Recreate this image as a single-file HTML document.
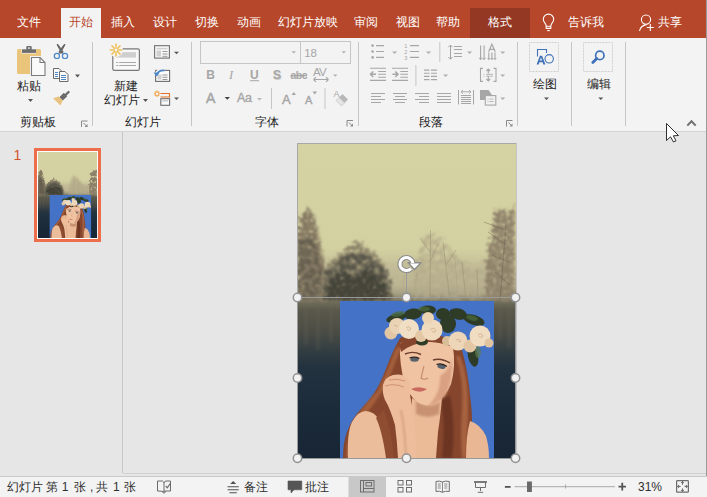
<!DOCTYPE html>
<html><head><meta charset="utf-8">
<style>
*{margin:0;padding:0;box-sizing:border-box}
html,body{width:707px;height:497px;overflow:hidden;background:#E6E6E6;font-family:"Liberation Sans",sans-serif;}
.a{position:absolute}
.t{position:absolute;font-size:12px;line-height:14px;white-space:nowrap;margin-top:1px}
#tabs{left:0;top:0;width:707px;height:38px;background:#B7472A}
.tab{color:#fff}
#ribbon{left:0;top:38px;width:707px;height:93px;background:#F3F3F3}
.lbl{color:#222}
.sep{position:absolute;width:1px;background:#C6C6C6}
.arr{position:absolute;width:0;height:0;border-left:2.5px solid transparent;border-right:2.5px solid transparent;border-top:3px solid #444}
.arrg{border-top-color:#A6A6A6}
#status{left:0;top:476px;width:707px;height:21px;background:#F3F3F3;border-top:1px solid #C9C9C9}
.st{color:#303030;font-size:12px}
</style></head><body>

<!-- tab bar -->
<div id="tabs" class="a"></div>
<div class="a" style="left:61px;top:8px;width:40px;height:30px;background:#F3F3F3"></div>
<div class="a" style="left:470px;top:8px;width:60px;height:30px;background:#953823"></div>
<div class="t tab" style="left:16.5px;top:14px">文件</div>
<div class="t" style="left:69px;top:14px;color:#B7472A">开始</div>
<div class="t tab" style="left:110.5px;top:14px">插入</div>
<div class="t tab" style="left:153px;top:14px">设计</div>
<div class="t tab" style="left:195px;top:14px">切换</div>
<div class="t tab" style="left:236.5px;top:14px">动画</div>
<div class="t tab" style="left:277.5px;top:14px">幻灯片放映</div>
<div class="t tab" style="left:354px;top:14px">审阅</div>
<div class="t tab" style="left:395.5px;top:14px">视图</div>
<div class="t tab" style="left:436px;top:14px">帮助</div>
<div class="t tab" style="left:487.5px;top:14px">格式</div>
<div class="t tab" style="left:568px;top:14px">告诉我</div>
<div class="t tab" style="left:658px;top:14px">共享</div>

<!-- ribbon -->
<div id="ribbon" class="a"></div>
<div class="a" style="left:0;top:131px;width:707px;height:1px;background:#D4D4D4"></div>
<div class="sep" style="left:92px;top:42px;height:84px"></div>
<div class="sep" style="left:191px;top:42px;height:84px"></div>
<div class="sep" style="left:358px;top:42px;height:84px"></div>
<div class="sep" style="left:517px;top:42px;height:84px"></div>
<div class="sep" style="left:571px;top:42px;height:84px"></div>
<div class="sep" style="left:625px;top:42px;height:84px"></div>

<div class="t lbl" style="left:17px;top:78px">粘贴</div>
<div class="t lbl" style="left:20px;top:114px">剪贴板</div>
<div class="t lbl" style="left:114px;top:78px">新建</div>
<div class="t lbl" style="left:104px;top:92px">幻灯片</div>
<div class="t lbl" style="left:125px;top:114px">幻灯片</div>
<div class="t lbl" style="left:255px;top:114px">字体</div>
<div class="t lbl" style="left:419px;top:114px">段落</div>
<div class="t lbl" style="left:533px;top:76px">绘图</div>
<div class="t lbl" style="left:587px;top:76px">编辑</div>

<!-- main -->
<div class="a" style="left:122px;top:132px;width:1px;height:341px;background:#C6C6C6"></div>
<div class="a" style="left:706px;top:0;width:1px;height:476px;background:#9A9A9A"></div>

<!-- status -->
<div id="status" class="a"></div>
<div class="t st" style="left:7px;top:479px">幻灯片 第 1</div>
<div class="t st" style="left:74px;top:479px">张</div>
<div class="t st" style="left:90px;top:479px">,</div>
<div class="t st" style="left:96px;top:479px">共</div>
<div class="t st" style="left:113px;top:479px">1</div>
<div class="t st" style="left:124px;top:479px">张</div>
<div class="t st" style="left:244px;top:479px">备注</div>
<div class="t st" style="left:305px;top:479px">批注</div>
<div class="t st" style="left:638px;top:479px">31%</div>

<svg class="a" style="left:530px;top:0" width="140" height="38" viewBox="530 0 140 38">
<g fill="none" stroke="#FFFFFF" stroke-width="1.1">
<path d="M546.2 26.2 V28.4 H550.8 V26.2 M546.2 26.2 Q546 24 544.6 22.6 Q543.3 21 543.3 19.3 A5.2 5.2 0 0 1 553.7 19.3 Q553.7 21 552.4 22.6 Q551 24 550.8 26.2 Z"/>
<path d="M547.2 30.6 H549.8"/>
<circle cx="646" cy="19.6" r="4.6"/>
<path d="M639.5 31 Q640.5 25.5 646.5 24.6"/>
<path d="M646.8 27.5 H653.8 M650.3 24 V31"/>
</g>
</svg>
<div class="a" style="left:123px;top:473px;width:583px;height:1px;background:#D0D0D0"></div>
<svg class="a" style="left:0;top:0" width="707" height="140" viewBox="0 0 707 140">
<!-- Paste -->
<rect x="17" y="49" width="24" height="25" rx="1.5" fill="#EBC47C"/>
<rect x="21.5" y="49" width="14.5" height="4.5" fill="#F3F3F3"/>
<rect x="22" y="49.3" width="14" height="3.6" fill="#6E6E6E"/>
<rect x="26.3" y="46" width="5.4" height="4" rx="1" fill="#6E6E6E"/>
<rect x="28.2" y="47.3" width="1.6" height="1.6" fill="#F3F3F3"/>
<path d="M30 56 H40.5 L46 61.5 V76.5 H30 Z" fill="#F3F3F3"/>
<path d="M31.5 57.5 H40 L45 62.5 V75.5 H31.5 Z" fill="#FAFAFA" stroke="#7A7A7A" stroke-width="1.1"/>
<path d="M40 57.5 V62.5 H45" fill="none" stroke="#7A7A7A" stroke-width="1.1"/>
<!-- dropdown under paste -->
<path d="M28 99 h5 l-2.5 3 z" fill="#555"/>
<!-- Scissors -->
<path d="M57 44.6 L57.9 44.4 L63.2 52 L62 53.6 Z M65.1 44.6 L64.2 44.4 L58.9 52 L60.1 53.6 Z" fill="#5F5F5F" stroke="#5F5F5F" stroke-width="0.9" stroke-linejoin="round"/>
<circle cx="56.9" cy="55.9" r="2.6" fill="none" stroke="#4A86C8" stroke-width="1.2"/>
<circle cx="65" cy="55.9" r="2.6" fill="none" stroke="#4A86C8" stroke-width="1.2"/>
<!-- Copy -->
<path d="M53.5 68.5 H59 L61.5 71 V78.5 H53.5 Z" fill="#FAFAFA" stroke="#6A6A6A" stroke-width="1"/>
<path d="M55 72.5 h3 M55 74.5 h3 M55 76.5 h3" stroke="#4A86C8" stroke-width="1"/>
<path d="M59.5 71.5 H65 L68 74.5 V81.5 H59.5 Z" fill="#FAFAFA" stroke="#6A6A6A" stroke-width="1"/>
<path d="M61 75.5 h5 M61 77.5 h5 M61 79.5 h5" stroke="#4A86C8" stroke-width="1"/>
<path d="M75 74.5 h5 l-2.5 3 z" fill="#555"/>
<!-- Format painter -->
<path d="M68.6 92 L65.3 95.3" stroke="#6A6A6A" stroke-width="2.3" stroke-linecap="round"/><path d="M59.3 97.2 L63.8 92.8 L67.2 96.2 L62.8 100.6 Z" fill="#6A6A6A"/>
<path d="M53 98.2 L58.8 96.6 L62.8 100.6 L60.5 105.5 Z" fill="#E8C27F"/>
<!-- New slide -->
<rect x="112.8" y="48.8" width="26.6" height="21.6" rx="1.6" fill="#F8F8F8" stroke="#777" stroke-width="1.2"/>
<rect x="116.2" y="52.1" width="19.8" height="5.5" fill="#CFCFCF"/>
<path d="M116.2 62.5 h2 M119.2 62.5 h16.8 M116.2 65.5 h2 M119.2 65.5 h16.8" stroke="#A6A6A6" stroke-width="1"/>
<circle cx="116" cy="50" r="7" fill="#F3F3F3"/>
<g stroke="#EFC15A" stroke-width="1.6">
<path d="M116 43.6 v4 M116 52.4 v4 M109.6 50 h4 M118.4 50 h4 M111.5 45.5 l2.8 2.8 M117.7 51.7 l2.8 2.8 M120.5 45.5 l-2.8 2.8 M114.3 51.7 l-2.8 2.8"/>
</g>
<circle cx="116" cy="50" r="2" fill="none" stroke="#EFC15A" stroke-width="1.2"/>
<path d="M143 99 h5 l-2.5 3 z" fill="#555"/>
<!-- Layout -->
<rect x="154.6" y="45.7" width="14.8" height="12.4" fill="#FAFAFA" stroke="#6E6E6E" stroke-width="1.1"/>
<rect x="156.5" y="47.8" width="11" height="1.6" fill="#D0D0D0"/>
<rect x="156.5" y="50.5" width="4.5" height="6" fill="#D0D0D0"/>
<path d="M162.5 51.5 h5 M162.5 54 h5 M162.5 56.3 h5" stroke="#8A8A8A" stroke-width="0.9"/>
<path d="M174 51.7 h5 l-2.5 2.5 z" fill="#555"/>
<!-- Reset -->
<rect x="155.6" y="70.4" width="14" height="11" fill="#FAFAFA" stroke="#6E6E6E" stroke-width="1.1"/>
<rect x="157.5" y="74.5" width="4" height="5" fill="#D0D0D0"/>
<path d="M162.5 75 h5 M162.5 77.3 h5 M162.5 79.5 h5" stroke="#8A8A8A" stroke-width="0.9"/>
<path d="M156 75 Q158 69 164.5 70.5" fill="none" stroke="#F3F3F3" stroke-width="3.5"/>
<path d="M156.5 75.5 Q158 70 164.5 70.5" fill="none" stroke="#4A86C8" stroke-width="1.8"/>
<path d="M153.5 72.5 L156.5 76.5 L159.5 72.8 Z" fill="#4A86C8"/>
<!-- Section -->
<g stroke="#EFA040" stroke-width="1.1">
<path d="M157 90.5 v6.4 M153.8 93.7 h6.4 M154.8 91.5 l4.4 4.4 M159.2 91.5 l-4.4 4.4"/>
</g>
<circle cx="157" cy="93.7" r="1.3" fill="#F3F3F3"/>
<path d="M160.5 93.5 H169.5 V97 H160.5" fill="none" stroke="#E07020" stroke-width="1.1"/>
<rect x="160.8" y="98.7" width="8.8" height="6.6" fill="#FAFAFA" stroke="#6E6E6E" stroke-width="1.1"/>
<rect x="162.2" y="100" width="6" height="1.6" fill="#D0D0D0"/>
<path d="M174 97.6 h5 l-2.5 2.5 z" fill="#555"/>
</svg>
<svg class="a" style="left:0;top:0" width="707" height="140" viewBox="0 0 707 140" font-family="Liberation Sans">
<!-- dialog launchers -->
<g stroke="#8A8A8A" stroke-width="1" fill="none">
<path d="M81.5 127 V121 H87.5"/><path d="M83.5 123 L87 126.5"/>
<path d="M347 126.5 V120.5 H353"/><path d="M349 122.5 L352.5 126"/>
<path d="M506.5 126.5 V120.5 H512.5"/><path d="M508.5 122.5 L512 126"/>
</g>
<path d="M84.5 127 h3 v-3 z" fill="#8A8A8A"/>
<path d="M350 126.5 h3 v-3 z" fill="#8A8A8A"/>
<path d="M509.5 126.5 h3 v-3 z" fill="#8A8A8A"/>
<!-- Font name box -->
<rect x="200.5" y="41.5" width="100" height="22" fill="none" stroke="#C6C6C6" stroke-width="1"/>
<rect x="300.5" y="41.5" width="50" height="22" fill="none" stroke="#C6C6C6" stroke-width="1"/>
<path d="M291.5 51.2 h4.5 l-2.25 2.3 z" fill="#B0B0B0"/>
<path d="M341.5 51.2 h4.5 l-2.25 2.3 z" fill="#B0B0B0"/>
<text x="304.2" y="56.8" font-size="11.5" fill="#A6A6A6">18</text>
<!-- B I U S abc AV -->
<text x="206.3" y="78.8" font-size="12" font-weight="bold" fill="#A6A6A6">B</text>
<text x="229" y="78.8" font-size="12.5" font-style="italic" font-family="Liberation Serif" fill="#A6A6A6">I</text>
<text x="250" y="78.8" font-size="12" font-weight="bold" fill="#A6A6A6">U</text>
<rect x="250" y="80.2" width="9" height="1" fill="#A6A6A6"/>
<text x="273.5" y="79.5" font-size="12.5" font-weight="bold" fill="#D0D0D0">S</text>
<text x="272.8" y="78.8" font-size="12.5" font-weight="bold" fill="#A6A6A6">S</text>
<text x="290.6" y="79" font-size="10.5" font-weight="bold" fill="#A6A6A6" letter-spacing="-0.6">abc</text>
<rect x="290.5" y="75" width="16.5" height="1.3" fill="#A6A6A6"/>
<text x="313" y="76" font-size="11.5" fill="#A6A6A6" letter-spacing="-0.9">AV</text>
<path d="M313.5 79.5 h15 M313.5 79.5 l2.5 -2.3 M313.5 79.5 l2.5 2.3 M328.5 79.5 l-2.5 -2.3 M328.5 79.5 l-2.5 2.3" stroke="#A6A6A6" stroke-width="1.1" fill="none"/>
<path d="M333 74.5 h4.5 l-2.25 2.3 z" fill="#B0B0B0"/>
<!-- row 3 -->
<text x="206" y="102.6" font-size="14" fill="#A6A6A6" stroke="#A6A6A6" stroke-width="0.5">A</text>
<path d="M224.6 97 h5.4 l-2.7 2.7 z" fill="#444"/>
<text x="237" y="102.3" font-size="12.5" fill="#A6A6A6" stroke="#A6A6A6" stroke-width="0.35" letter-spacing="-0.4">Aa</text>
<path d="M257 98 h5 l-2.5 2.5 z" fill="#B8B8B8"/>
<rect x="271" y="88" width="1" height="21" fill="#C6C6C6"/>
<text x="282" y="104" font-size="13" fill="#A6A6A6" stroke="#A6A6A6" stroke-width="0.4">A</text>
<path d="M291.5 95 h4.5 l-2.25 -3 z" fill="#A6A6A6"/>
<text x="305" y="104" font-size="11" fill="#A6A6A6" stroke="#A6A6A6" stroke-width="0.4">A</text>
<path d="M312.5 91.5 h4.5 l-2.25 3 z" fill="#A6A6A6"/>
<rect x="324.5" y="88" width="1" height="21" fill="#C6C6C6"/>
<text x="333.5" y="97" font-size="9" fill="#A6A6A6">A</text>
<path d="M336 100.5 L342.5 94 L348 99.5 L341.5 106 Z" fill="#B8B8B8"/>
<path d="M336 100.5 L339 97.5 L344.5 103 L341.5 106 Z" fill="#E6E6E6" stroke="#C8C8C8" stroke-width="0.6"/>
<!-- Paragraph -->
<g fill="#A6A6A6">
<circle cx="372.6" cy="45.6" r="1.3"/><circle cx="372.6" cy="51.5" r="1.3"/><circle cx="372.6" cy="57.4" r="1.3"/>
</g>
<g stroke="#A6A6A6" stroke-width="1.1" fill="none">
<path d="M376 45.6 h8 M376 51.5 h8 M376 57.4 h8"/>
<path d="M410 45.6 h9 M410 51.5 h9 M410 57.4 h9"/>
</g>
<text x="404.3" y="48.3" font-size="5.5" fill="#A6A6A6">1</text>
<text x="404.3" y="54.2" font-size="5.5" fill="#A6A6A6">2</text>
<text x="404.3" y="60.1" font-size="5.5" fill="#A6A6A6">3</text>
<path d="M392 51.6 h5.2 l-2.6 2.4 z M426 51.6 h5.2 l-2.6 2.4 z M467 51.6 h5.2 l-2.6 2.4 z M500.2 51.6 h5 l-2.5 2.4 z M443 74.5 h5.2 l-2.6 2.4 z M500.2 74.5 h5 l-2.5 2.4 z M500.2 97.6 h5 l-2.5 2.4 z" fill="#B0B0B0"/>
<rect x="439.3" y="42" width="1" height="20" fill="#C6C6C6"/>
<rect x="415.4" y="65" width="1" height="21" fill="#C6C6C6"/>
<g stroke="#A6A6A6" stroke-width="1.1" fill="none">
<!-- decrease indent -->
<path d="M370 68.3 h16 M378.3 71.5 h7.7 M378.3 74.3 h7.7 M378.3 77.2 h7.7 M370 80.4 h16"/>
<path d="M370.5 74.3 h5.5 M373.2 71.5 l-2.7 2.8 l2.7 2.8" stroke-width="1.5"/>
<!-- increase indent -->
<path d="M392 68.3 h16 M400.3 71.5 h7.7 M400.3 74.3 h7.7 M400.3 77.2 h7.7 M392 80.4 h16"/>
<path d="M392.5 74.3 h5.5 M395.3 71.5 l2.7 2.8 l-2.7 2.8" stroke-width="1.5"/>
<!-- columns -->
<path d="M424 70.1 h5.5 M431 70.1 h6 M424 73.3 h5.5 M431 73.3 h6 M424 76.4 h5.5 M431 76.4 h6 M424 79.6 h5.5 M431 79.6 h6"/>
<!-- align left -->
<path d="M371 93.5 h14 M371 96.5 h10 M371 99.5 h14 M371 102.5 h10" stroke-width="1"/>
<!-- center -->
<path d="M393 93.5 h14 M395 96.5 h10 M393 99.5 h14 M395 102.5 h10" stroke-width="1"/>
<!-- right -->
<path d="M415 93.5 h14 M419 96.5 h10 M415 99.5 h14 M419 102.5 h10" stroke-width="1"/>
<!-- justify -->
<path d="M437 93.5 h14 M437 96.5 h14 M437 99.5 h14 M437 102.5 h14" stroke-width="1"/>
<!-- distributed -->
<path d="M458.5 90 v14.5 M473.5 90 v14.5 M461 95.5 h10 M461 97.5 h10 M461 99.5 h10 M461 101.5 h10 M461 103.5 h10" stroke-width="1"/>
<path d="M461 91.8 h10 M461 91.8 l2 -1.8 M461 91.8 l2 1.8 M471 91.8 l-2 -1.8 M471 91.8 l-2 1.8" stroke-width="0.9"/>
<!-- line spacing -->
<path d="M450.5 45 v14 M448.4 47.2 l2.1 -2.2 l2.1 2.2 M448.4 57 l2.1 2.2 l2.1 -2.2" stroke-width="1"/>
<path d="M454 46.5 h8 M454 49.5 h8 M454 53.5 h8 M454 56.5 h8" stroke-width="1"/>
<!-- text direction -->
<path d="M480.6 45.5 v14 M484.1 45.5 v14 M488.8 52.5 v7 M491.9 52.5 v7 M495 52.5 v7"/>
<path d="M479 57.8 l1.6 2 l1.6 -2 M482.5 57.8 l1.6 2 l1.6 -2 M487.5 58 l1.3 1.6 l1.3 -1.6 M490.6 58 l1.3 1.6 l1.3 -1.6 M493.7 58 l1.3 1.6 l1.3 -1.6" stroke-width="0.9"/>
<!-- align text -->
<path d="M483 68.4 h-2.5 v13 h2.5 M493.5 68.4 h2.5 v13 h-2.5"/>
<path d="M488.3 69 v4.5 M486.4 71 l1.9 -2 l1.9 2 M488.3 76.5 v4.5 M486.4 79 l1.9 2 l1.9 -2"/>
<path d="M483.5 74.3 h1 M486 74.3 h7 M483.5 76.2 h1 M486 76.2 h7" stroke-width="0.8"/>
<!-- smartart -->
<rect x="485.3" y="95.6" width="10.5" height="9.5"/>
<path d="M487.5 99 h1 M489.5 99 h4 M487.5 101.5 h1 M489.5 101.5 h4" stroke-width="0.8"/>
</g>
<path d="M488.6 51.8 L491.9 44.2 L495.2 51.8 M489.8 49.3 H494" fill="none" stroke="#A6A6A6" stroke-width="1.2"/>
<path d="M480 90 h8.5 l3.5 5 h-7 v5 h-5 z" fill="#A6A6A6"/>
<!-- Drawing -->
<rect x="529.5" y="42.5" width="29" height="29" fill="none" stroke="#D0D0D0" stroke-width="1" stroke-dasharray="1 0.5"/>
<rect x="583.5" y="42.5" width="29" height="29" fill="none" stroke="#D0D0D0" stroke-width="1" stroke-dasharray="1 0.5"/>
<path d="M537.5 56.5 V49.5 H546.5 V53" fill="none" stroke="#3F72B8" stroke-width="1.1"/>
<circle cx="549.2" cy="58.8" r="4.2" fill="#F3F3F3" stroke="#3F72B8" stroke-width="1.1"/>
<path d="M536.6 64.5 L539.9 55.8 H542.1 L545.4 64.5 H543.3 L542.6 62.3 H539.4 L538.7 64.5 Z M539.9 60.6 H542.1 L541 57.4 Z" fill="#3F72B8" fill-rule="evenodd" stroke="#F3F3F3" stroke-width="0.6" paint-order="stroke"/>
<circle cx="599.8" cy="55.4" r="4.2" fill="none" stroke="#3F72B8" stroke-width="1.7"/>
<path d="M596.8 58.5 L592.8 62.5" stroke="#3F72B8" stroke-width="2.8" stroke-linecap="round"/>
<path d="M544 97.5 h5 l-2.5 2.5 z M598.3 97.5 h5 l-2.5 2.5 z" fill="#555"/>
<!-- collapse chevron -->
<path d="M687.3 125.6 L691.5 121.2 L695.7 125.6" fill="none" stroke="#707070" stroke-width="2"/>
</svg>
<svg class="a" style="left:0;top:0" width="707" height="497" viewBox="0 0 707 497">
<defs>
<linearGradient id="sky" x1="0" y1="144" x2="0" y2="458" gradientUnits="userSpaceOnUse">
<stop offset="0" stop-color="#D5D3A4"/>
<stop offset="0.33" stop-color="#D3D0A1"/>
<stop offset="0.45" stop-color="#BDB693"/>
<stop offset="0.49" stop-color="#7A7762"/>
<stop offset="0.53" stop-color="#5A584A"/>
<stop offset="0.6" stop-color="#4A4C45"/>
<stop offset="0.66" stop-color="#323D42"/>
<stop offset="0.71" stop-color="#23323F"/>
<stop offset="0.85" stop-color="#1C2B3A"/>
<stop offset="1" stop-color="#172535"/>
</linearGradient>
<linearGradient id="dark" x1="0" y1="315" x2="0" y2="458" gradientUnits="userSpaceOnUse">
<stop offset="0" stop-color="#22303A" stop-opacity="0"/>
<stop offset="0.25" stop-color="#22303C" stop-opacity="0.9"/>
<stop offset="0.4" stop-color="#1F2E3C" stop-opacity="1"/>
<stop offset="1" stop-color="#172535" stop-opacity="1"/>
</linearGradient>
<filter id="b3" x="-50%" y="-50%" width="200%" height="200%"><feGaussianBlur stdDeviation="3"/></filter>
<filter id="b2" x="-50%" y="-50%" width="200%" height="200%"><feGaussianBlur stdDeviation="1.8"/></filter>
<filter id="b1" x="-50%" y="-50%" width="200%" height="200%"><feGaussianBlur stdDeviation="0.8"/></filter>
<filter id="b05" x="-50%" y="-50%" width="200%" height="200%"><feGaussianBlur stdDeviation="0.5"/></filter>
<filter id="fol" x="-20%" y="-20%" width="140%" height="140%">
<feTurbulence type="fractalNoise" baseFrequency="0.3" numOctaves="3" seed="5" result="n"/>
<feDisplacementMap in="SourceGraphic" in2="n" scale="12" xChannelSelector="R" yChannelSelector="G" result="d"/>
<feColorMatrix in="n" type="matrix" values="0 0 0 0 0  0 0 0 0 0  0 0 0 0 0  4 0 0 0 -0.9" result="m"/>
<feComposite in="d" in2="m" operator="in" result="c"/>
<feGaussianBlur in="c" stdDeviation="0.8"/>
</filter>
<filter id="fol2" x="-20%" y="-20%" width="140%" height="140%">
<feTurbulence type="fractalNoise" baseFrequency="0.2" numOctaves="3" seed="11" result="n"/>
<feDisplacementMap in="SourceGraphic" in2="n" scale="14" xChannelSelector="G" yChannelSelector="R" result="d"/>
<feColorMatrix in="n" type="matrix" values="0 0 0 0 0  0 0 0 0 0  0 0 0 0 0  3 0 0 0 -0.8" result="m"/>
<feComposite in="d" in2="m" operator="in" result="c"/>
<feGaussianBlur in="c" stdDeviation="1.2"/>
</filter>
<filter id="folt" x="-20%" y="-20%" width="140%" height="140%">
<feTurbulence type="fractalNoise" baseFrequency="0.1" numOctaves="2" seed="5" result="n"/>
<feDisplacementMap in="SourceGraphic" in2="n" scale="14" xChannelSelector="R" yChannelSelector="G" result="d"/>
<feColorMatrix in="n" type="matrix" values="0 0 0 0 0  0 0 0 0 0  0 0 0 0 0  4 0 0 0 -0.9" result="m"/>
<feComposite in="d" in2="m" operator="in" result="c"/>
<feGaussianBlur in="c" stdDeviation="2"/>
</filter>
<clipPath id="slideclip"><rect x="298" y="144" width="218" height="314"/></clipPath>
<clipPath id="womclip"><rect x="340" y="301" width="154" height="157"/></clipPath>
<clipPath id="thumbclip"><rect x="38" y="152" width="59" height="86"/></clipPath>
</defs>
<!-- slide border -->
<rect x="297.5" y="143.5" width="219" height="315" fill="none" stroke="#C4C4C4" stroke-width="1"/><path d="M297.5 458 V143.5 H516" fill="none" stroke="#A8A8A8" stroke-width="1"/>
<g id="slidecontent" clip-path="url(#slideclip)">
<rect x="298" y="144" width="218" height="314" fill="url(#sky)"/>
<!-- fog band -->
<rect x="298" y="262" width="217" height="36" fill="#BDB594" filter="url(#b3)" opacity="0.5"/>
<!-- left pine -->
<path d="M308 207 L314 216 L317 228 L321 244 L324 262 L328 282 L331 300 L298 300 L298 225 L302 214 Z" fill="#857862" filter="url(#fol)"/>
<path d="M298 240 L312 236 L320 262 L326 300 L298 300 Z" fill="#665E50" filter="url(#fol2)"/>
<!-- middle bush -->
<path d="M320 300 L322 276 L330 262 L342 252 L356 240 L368 248 L380 258 L388 272 L392 300 Z" fill="#8E846A" filter="url(#fol)"/>
<path d="M322 300 L324 276 L334 262 L346 258 L356 252 L370 258 L382 266 L390 280 L392 300 Z" fill="#56544A" filter="url(#fol2)"/>
<path d="M326 300 L328 284 L336 276 L346 272 L356 278 L366 270 L378 276 L386 284 L390 300 Z" fill="#424337" filter="url(#fol)" opacity="0.95"/>
<!-- right trees -->
<path d="M410 300 L414 262 L428 230 L445 240 L458 258 L472 268 L488 262 L490 300 Z" fill="#B4AB8B" filter="url(#fol2)" opacity="0.8"/>
<g stroke="#978B71" stroke-width="0.9" fill="none" filter="url(#b05)" opacity="0.55">
<path d="M430 300 L430.5 230 M430 252 L420 238 M430 262 L438 244 M443 242 L450 300 M446 265 L456 250 M462 262 L466 300 M477 270 L478 300"/>
</g>
<g stroke="#A99D82" stroke-width="0.8" fill="none" filter="url(#b05)" opacity="0.5">
<path d="M414 300 L418 262 M455 258 L458 300 M490 248 L486 300 M402 300 L404 275"/>
</g>
<path d="M496 208 L508 212 L515 205 L515 300 L486 300 Q484 270 490 240 Z" fill="#8F826A" filter="url(#fol)"/>
<g stroke="#5A5244" stroke-width="0.8" fill="none" filter="url(#b05)" opacity="0.45">
<path d="M500 300 L506 225 M506 245 L488 232 M508 262 L492 255 M510 285 L495 272 M505 230 L484 222"/>
</g>
<!-- lower forest (olive) -->
<g stroke="#6A6656" stroke-width="2.5" filter="url(#b2)" opacity="0.35">
<path d="M306 300 V345 M318 300 V350 M331 300 V342 M500 300 V340 M509 300 V348"/>
</g>
<!-- woman image -->
<g clip-path="url(#womclip)">
<rect x="340" y="301" width="154" height="157" fill="#4472C6"/>
<!-- hair mass -->
<path d="M400 338 Q412 332 430 334 Q452 336 462 350 Q468 372 470 395 Q472 410 472 420 Q470 440 469 458 L343 458 Q343 442 347 432 Q352 418 362 408 Q376 394 384 374 Q392 352 400 338 Z" fill="#86462D"/>
<path d="M396 348 Q388 370 378 390 Q364 406 354 420 Q347 436 346 458 L351 458 Q352 434 364 416 Q380 398 390 376 Q396 360 402 346 Z" fill="#A45E3B" filter="url(#b1)"/>
<path d="M456 356 Q464 380 462 410 Q460 435 462 458 L466 458 Q468 430 468 405 Q468 375 460 356 Z" fill="#A76240" filter="url(#b1)"/>
<path d="M440 398 Q446 420 442 458 L452 458 Q456 425 450 396 Z" fill="#5A2B1C" filter="url(#b1)" opacity="0.6"/>
<!-- left shoulder -->
<path d="M348 458 Q347 432 352 422 Q358 411 366 411 Q374 412 378 418 Q386 435 389 458 Z" fill="#ECBD9A"/>
<path d="M376 418 Q382 430 386 458 L394 458 Q392 432 384 410 Z" fill="#8E4C30"/>
<!-- right shoulder -->
<path d="M466 458 Q466 436 470 421 Q480 424 486 436 Q489 446 489 458 Z" fill="#E9B794"/>
<!-- neck/chest -->
<path d="M412 398 Q426 408 442 398 Q440 420 438 432 Q437 445 436 458 L410 458 Z" fill="#EBBB98"/>
<path d="M416 400 Q428 410 440 402 L439 414 Q428 420 416 414 Z" fill="#BA8264" opacity="0.7" filter="url(#b1)"/>
<!-- face -->
<path d="M400 343 Q426 336 453 347 Q456 366 451 384 Q445 398 433 404 Q424 407 417 402 Q409 395 405 385 Q399 364 400 343 Z" fill="#F0C3A3"/>
<path d="M440 376 Q450 370 452 358 Q453 382 445 396 Q437 404 428 406 Q441 393 440 376 Z" fill="#D9A182" filter="url(#b1)"/>
<path d="M399 344 Q410 337 428 336 Q448 337 456 348 Q438 341 428 342 Q412 343 401 352 Z" fill="#86462D"/>
<!-- brows & eyes -->
<path d="M405 354 Q413 350.5 421 354.5 M433 360 Q441 357.5 450 363" stroke="#6B3F2C" stroke-width="1.4" fill="none"/>
<ellipse cx="414.5" cy="359.5" rx="4.2" ry="2.2" fill="#56616C"/>
<ellipse cx="441.5" cy="366.5" rx="4.2" ry="2.2" fill="#56616C" transform="rotate(12 441.5 366.5)"/>
<path d="M409.5 358 Q414.5 356 419.5 358.5 M436.5 364.5 Q442 362.5 447 366.5" stroke="#2E221E" stroke-width="1.1" fill="none"/>
<path d="M424 366 Q422 374 421 378 Q424 380.5 428 378" stroke="#C48A6C" stroke-width="1.1" fill="none"/>
<path d="M411 389 Q418 385.5 427 389 Q420 394.5 411 389 Z" fill="#C96A60"/>
<!-- hand -->
<path d="M383 385 Q385 377 393 375 Q403 373 408 379 Q411 387 410 395 Q412 405 414 418 Q416 436 416 458 L398 458 Q397 440 395 425 Q390 408 385 400 Q382 393 383 385 Z" fill="#EEBD9B"/>
<path d="M385 386 Q394 383 404 387 M389 380 Q397 378 405 381" stroke="#C98D6E" stroke-width="0.9" fill="none"/>
<path d="M401 410 Q405 430 406 458" stroke="#D29C7D" stroke-width="1.6" fill="none" filter="url(#b1)"/>
<!-- crown leaves -->
<g fill="#2D3B25" filter="url(#b05)">
<ellipse cx="396" cy="318" rx="10" ry="4" transform="rotate(-14 396 318)"/>
<ellipse cx="413" cy="314" rx="9" ry="5.5" transform="rotate(-8 413 314)"/>
<ellipse cx="428" cy="310" rx="8" ry="4.5"/>
<ellipse cx="443" cy="314" rx="7" ry="6"/>
<ellipse cx="458" cy="314" rx="9" ry="5.5" transform="rotate(12 458 314)"/>
<ellipse cx="474" cy="320" rx="11" ry="5" transform="rotate(18 474 320)"/>
</g>
<g fill="#4C6A3C" opacity="0.75" filter="url(#b05)">
<ellipse cx="398" cy="314" rx="7" ry="2.5" transform="rotate(-12 398 314)"/>
<ellipse cx="424" cy="309" rx="6" ry="2.5"/>
<ellipse cx="472" cy="318" rx="6" ry="2.5" transform="rotate(15 472 318)"/>
</g>
<g fill="#2D3B25" filter="url(#b05)">
<ellipse cx="448" cy="324" rx="8" ry="9"/>
<ellipse cx="473" cy="356" rx="5" ry="11" transform="rotate(-12 473 356)"/>
<ellipse cx="422" cy="342" rx="6" ry="3.5"/>
</g>
<ellipse cx="478" cy="352" rx="3" ry="6" fill="#5B7A4A" opacity="0.7" filter="url(#b05)"/>
<!-- roses -->
<g filter="url(#b05)">
<circle cx="391" cy="333" r="6.5" fill="#E2C6A3"/>
<circle cx="397" cy="326" r="8" fill="#EAD3B4"/>
<circle cx="409" cy="329" r="10" fill="#F1DFC5"/>
<circle cx="421" cy="336" r="6" fill="#E4C8A6"/>
<circle cx="432" cy="330" r="10.5" fill="#EFDABD"/>
<circle cx="428" cy="318" r="6" fill="#EBD4B4"/>
<circle cx="447" cy="341" r="5" fill="#D9BD99"/>
<circle cx="458" cy="341" r="9.5" fill="#EDD6B7"/>
<circle cx="470" cy="346" r="6.5" fill="#E3C7A5"/>
<circle cx="480" cy="336" r="10.5" fill="#F0DCC0"/>
<circle cx="489" cy="343" r="4.5" fill="#E0C4A0"/>
</g>
<g fill="none" stroke="#C8A47F" stroke-width="0.9" opacity="0.75">
<path d="M406 328 q3 -3 5 1 q-2 3 -4 0 M430 330 q4 -4 6 1 q-2 3 -4 0 M456 340 q3 -2 5 1 q-2 2 -3 0 M478 335 q3 -3 5 1 q-2 3 -4 0 M394 326 q2 -2 4 1"/>
</g>
</g>
</g>
</g>
</g>
<!-- thumbnail -->
<rect x="35.5" y="149.5" width="64" height="91" fill="none" stroke="#EC6E4A" stroke-width="3"/>
<rect x="37.5" y="151.5" width="60" height="87" fill="none" stroke="#FFFFFF" stroke-width="1"/>
<g transform="translate(38,152) scale(0.2719,0.2739) translate(-298,-144)"><g id="thumbcontent" clip-path="url(#slideclip)">
<rect x="298" y="144" width="218" height="314" fill="url(#sky)"/>
<!-- fog band -->
<rect x="298" y="262" width="217" height="36" fill="#BDB594" filter="url(#b3)" opacity="0.5"/>
<!-- left pine -->
<path d="M308 207 L314 216 L317 228 L321 244 L324 262 L328 282 L331 300 L298 300 L298 225 L302 214 Z" fill="#857862" filter="url(#folt)"/>
<path d="M298 240 L312 236 L320 262 L326 300 L298 300 Z" fill="#665E50" filter="url(#b3)"/>
<!-- middle bush -->
<path d="M320 300 L322 276 L330 262 L342 252 L356 240 L368 248 L380 258 L388 272 L392 300 Z" fill="#8E846A" filter="url(#folt)"/>
<path d="M322 300 L324 276 L334 262 L346 258 L356 252 L370 258 L382 266 L390 280 L392 300 Z" fill="#56544A" filter="url(#b3)"/>
<path d="M326 300 L328 284 L336 276 L346 272 L356 278 L366 270 L378 276 L386 284 L390 300 Z" fill="#424337" filter="url(#folt)" opacity="0.95"/>
<!-- right trees -->
<path d="M410 300 L414 262 L428 230 L445 240 L458 258 L472 268 L488 262 L490 300 Z" fill="#B4AB8B" filter="url(#b3)" opacity="0.8"/>
<g stroke="#978B71" stroke-width="0.9" fill="none" filter="url(#b05)" opacity="0.55">
<path d="M430 300 L430.5 230 M430 252 L420 238 M430 262 L438 244 M443 242 L450 300 M446 265 L456 250 M462 262 L466 300 M477 270 L478 300"/>
</g>
<g stroke="#A99D82" stroke-width="0.8" fill="none" filter="url(#b05)" opacity="0.5">
<path d="M414 300 L418 262 M455 258 L458 300 M490 248 L486 300 M402 300 L404 275"/>
</g>
<path d="M496 208 L508 212 L515 205 L515 300 L486 300 Q484 270 490 240 Z" fill="#8F826A" filter="url(#folt)"/>
<g stroke="#5A5244" stroke-width="0.8" fill="none" filter="url(#b05)" opacity="0.45">
<path d="M500 300 L506 225 M506 245 L488 232 M508 262 L492 255 M510 285 L495 272 M505 230 L484 222"/>
</g>
<!-- lower forest (olive) -->
<g stroke="#6A6656" stroke-width="2.5" filter="url(#b2)" opacity="0.35">
<path d="M306 300 V345 M318 300 V350 M331 300 V342 M500 300 V340 M509 300 V348"/>
</g>
<!-- woman image -->
<g clip-path="url(#womclip)">
<rect x="340" y="301" width="154" height="157" fill="#4472C6"/>
<!-- hair mass -->
<path d="M400 338 Q412 332 430 334 Q452 336 462 350 Q468 372 470 395 Q472 410 472 420 Q470 440 469 458 L343 458 Q343 442 347 432 Q352 418 362 408 Q376 394 384 374 Q392 352 400 338 Z" fill="#86462D"/>
<path d="M396 348 Q388 370 378 390 Q364 406 354 420 Q347 436 346 458 L351 458 Q352 434 364 416 Q380 398 390 376 Q396 360 402 346 Z" fill="#A45E3B" filter="url(#b1)"/>
<path d="M456 356 Q464 380 462 410 Q460 435 462 458 L466 458 Q468 430 468 405 Q468 375 460 356 Z" fill="#A76240" filter="url(#b1)"/>
<path d="M440 398 Q446 420 442 458 L452 458 Q456 425 450 396 Z" fill="#5A2B1C" filter="url(#b1)" opacity="0.6"/>
<!-- left shoulder -->
<path d="M348 458 Q347 432 352 422 Q358 411 366 411 Q374 412 378 418 Q386 435 389 458 Z" fill="#ECBD9A"/>
<path d="M376 418 Q382 430 386 458 L394 458 Q392 432 384 410 Z" fill="#8E4C30"/>
<!-- right shoulder -->
<path d="M466 458 Q466 436 470 421 Q480 424 486 436 Q489 446 489 458 Z" fill="#E9B794"/>
<!-- neck/chest -->
<path d="M412 398 Q426 408 442 398 Q440 420 438 432 Q437 445 436 458 L410 458 Z" fill="#EBBB98"/>
<path d="M416 400 Q428 410 440 402 L439 414 Q428 420 416 414 Z" fill="#BA8264" opacity="0.7" filter="url(#b1)"/>
<!-- face -->
<path d="M400 343 Q426 336 453 347 Q456 366 451 384 Q445 398 433 404 Q424 407 417 402 Q409 395 405 385 Q399 364 400 343 Z" fill="#F0C3A3"/>
<path d="M440 376 Q450 370 452 358 Q453 382 445 396 Q437 404 428 406 Q441 393 440 376 Z" fill="#D9A182" filter="url(#b1)"/>
<path d="M399 344 Q410 337 428 336 Q448 337 456 348 Q438 341 428 342 Q412 343 401 352 Z" fill="#86462D"/>
<!-- brows & eyes -->
<path d="M405 354 Q413 350.5 421 354.5 M433 360 Q441 357.5 450 363" stroke="#6B3F2C" stroke-width="1.4" fill="none"/>
<ellipse cx="414.5" cy="359.5" rx="4.2" ry="2.2" fill="#56616C"/>
<ellipse cx="441.5" cy="366.5" rx="4.2" ry="2.2" fill="#56616C" transform="rotate(12 441.5 366.5)"/>
<path d="M409.5 358 Q414.5 356 419.5 358.5 M436.5 364.5 Q442 362.5 447 366.5" stroke="#2E221E" stroke-width="1.1" fill="none"/>
<path d="M424 366 Q422 374 421 378 Q424 380.5 428 378" stroke="#C48A6C" stroke-width="1.1" fill="none"/>
<path d="M411 389 Q418 385.5 427 389 Q420 394.5 411 389 Z" fill="#C96A60"/>
<!-- hand -->
<path d="M383 385 Q385 377 393 375 Q403 373 408 379 Q411 387 410 395 Q412 405 414 418 Q416 436 416 458 L398 458 Q397 440 395 425 Q390 408 385 400 Q382 393 383 385 Z" fill="#EEBD9B"/>
<path d="M385 386 Q394 383 404 387 M389 380 Q397 378 405 381" stroke="#C98D6E" stroke-width="0.9" fill="none"/>
<path d="M401 410 Q405 430 406 458" stroke="#D29C7D" stroke-width="1.6" fill="none" filter="url(#b1)"/>
<!-- crown leaves -->
<g fill="#2D3B25" filter="url(#b05)">
<ellipse cx="396" cy="318" rx="10" ry="4" transform="rotate(-14 396 318)"/>
<ellipse cx="413" cy="314" rx="9" ry="5.5" transform="rotate(-8 413 314)"/>
<ellipse cx="428" cy="310" rx="8" ry="4.5"/>
<ellipse cx="443" cy="314" rx="7" ry="6"/>
<ellipse cx="458" cy="314" rx="9" ry="5.5" transform="rotate(12 458 314)"/>
<ellipse cx="474" cy="320" rx="11" ry="5" transform="rotate(18 474 320)"/>
</g>
<g fill="#4C6A3C" opacity="0.75" filter="url(#b05)">
<ellipse cx="398" cy="314" rx="7" ry="2.5" transform="rotate(-12 398 314)"/>
<ellipse cx="424" cy="309" rx="6" ry="2.5"/>
<ellipse cx="472" cy="318" rx="6" ry="2.5" transform="rotate(15 472 318)"/>
</g>
<g fill="#2D3B25" filter="url(#b05)">
<ellipse cx="448" cy="324" rx="8" ry="9"/>
<ellipse cx="473" cy="356" rx="5" ry="11" transform="rotate(-12 473 356)"/>
<ellipse cx="422" cy="342" rx="6" ry="3.5"/>
</g>
<ellipse cx="478" cy="352" rx="3" ry="6" fill="#5B7A4A" opacity="0.7" filter="url(#b05)"/>
<!-- roses -->
<g filter="url(#b05)">
<circle cx="391" cy="333" r="6.5" fill="#E2C6A3"/>
<circle cx="397" cy="326" r="8" fill="#EAD3B4"/>
<circle cx="409" cy="329" r="10" fill="#F1DFC5"/>
<circle cx="421" cy="336" r="6" fill="#E4C8A6"/>
<circle cx="432" cy="330" r="10.5" fill="#EFDABD"/>
<circle cx="428" cy="318" r="6" fill="#EBD4B4"/>
<circle cx="447" cy="341" r="5" fill="#D9BD99"/>
<circle cx="458" cy="341" r="9.5" fill="#EDD6B7"/>
<circle cx="470" cy="346" r="6.5" fill="#E3C7A5"/>
<circle cx="480" cy="336" r="10.5" fill="#F0DCC0"/>
<circle cx="489" cy="343" r="4.5" fill="#E0C4A0"/>
</g>
<g fill="none" stroke="#C8A47F" stroke-width="0.9" opacity="0.75">
<path d="M406 328 q3 -3 5 1 q-2 3 -4 0 M430 330 q4 -4 6 1 q-2 3 -4 0 M456 340 q3 -2 5 1 q-2 2 -3 0 M478 335 q3 -3 5 1 q-2 3 -4 0 M394 326 q2 -2 4 1"/>
</g>
</g>
</g>
</g>
</g>
</g>
<!-- selection -->
<g fill="none" stroke="#9A9A9A" stroke-width="1">
<path d="M297.5 297.5 H515.5 V458.5 H297.5 Z"/>
<path d="M406.5 273 V293"/>
</g>
<g fill="#F2F2F2" stroke="#929292" stroke-width="1.5">
<circle cx="297.5" cy="297.5" r="4.2"/><circle cx="406.5" cy="297.5" r="4.2"/><circle cx="515.5" cy="297.5" r="4.2"/>
<circle cx="297.5" cy="378" r="4.2"/><circle cx="515.5" cy="378" r="4.2"/>
<circle cx="297.5" cy="458.3" r="4.2"/><circle cx="406.5" cy="458.3" r="4.2"/><circle cx="515.5" cy="458.3" r="4.2"/>
</g>
<!-- rotate handle -->
<path d="M411.1 268.6 A6.5 6.5 0 1 1 412.9 263.1" fill="none" stroke="#8E8E8E" stroke-width="5.2"/>
<path d="M407.8 262.6 L421.2 262.6 L414.5 269.8 Z" fill="#8E8E8E" stroke="#8E8E8E" stroke-width="1.2" stroke-linejoin="round"/>
<path d="M411.1 268.6 A6.5 6.5 0 1 1 412.9 263.1" fill="none" stroke="#FFFFFF" stroke-width="3"/>
<path d="M409.8 263.6 L419.2 263.6 L414.5 268.4 Z" fill="#FFFFFF"/>
</svg>
<div class="t" style="left:13.5px;top:145.5px;font-size:14px;line-height:16px;color:#D4532F">1</div>
<svg class="a" style="left:0;top:440px" width="707" height="57" viewBox="0 440 707 57">
<!-- normal view bg -->
<rect x="348.5" y="477" width="37.5" height="20" fill="#C8C8C8"/>
<!-- spell check book -->
<g fill="none" stroke="#6A6A6A" stroke-width="1">
<path d="M157.5 481 H162.5 Q164 482 164 483 V492 Q163 491 157.5 491 Z"/>
<path d="M164 483 Q164.5 481 166 481 H170.5 V491 H164"/>
<path d="M162 491.5 L164 493.3 L166 491.5" />
<path d="M165.8 486 L167.3 487.8 L170.3 483.5" stroke-width="1.2"/>
</g>
<!-- notes icon -->
<path d="M230.2 484 L233.2 481 L236.2 484 Z" fill="#505050"/>
<path d="M227.6 486.7 H238.7 M227.6 489.8 H238.7 M229.5 492.8 H236.8" stroke="#505050" stroke-width="1.1"/>
<!-- comment icon -->
<path d="M288 481 H301.8 V489.8 H294 L291 493 V489.8 H288 Z" fill="#555555" stroke="#555" stroke-width="0.6" stroke-linejoin="round"/>
<!-- normal view icon -->
<g fill="none" stroke="#6E6E6E" stroke-width="1">
<rect x="360.5" y="480.5" width="13.5" height="11.5"/>
<path d="M363.5 480.5 V492 M363.5 488.5 H374"/>
<rect x="366" y="482.5" width="5.5" height="3.5"/>
<!-- grid -->
<rect x="398" y="480.5" width="5" height="4.5"/><rect x="406.5" y="480.5" width="5" height="4.5"/>
<rect x="398" y="487.5" width="5" height="4.5"/><rect x="406.5" y="487.5" width="5" height="4.5"/>
<!-- reading -->
<path d="M436 481.5 Q439.5 480.5 442.5 482 Q445.5 480.5 449.3 481.5 V491.5 Q445.5 490.5 442.5 492.3 Q439.5 490.5 436 491.5 Z"/>
<path d="M442.5 482 V492.3 M437.8 484 h3 M437.8 486 h3 M437.8 488 h3 M444.3 484 h3 M444.3 486 h3 M444.3 488 h3" stroke-width="0.8"/>
<!-- slideshow -->
<path d="M474.3 482 H486.5 M475.5 482 V487.5 H485.5 V482 M480.5 487.5 V491 M477.8 492.3 H483.2"/>
<!-- fit -->
<rect x="676.6" y="480.6" width="11.8" height="11.6" rx="0.8" stroke-width="1.2"/>
<path d="M682.5 481 V484.8 M681 482.6 H684 M682.5 488.4 V492 M681 490.3 H684 M677 486.4 H680.6 M678.6 484.9 V488 M684.4 486.4 H688 M686.4 484.9 V488" stroke-width="1"/>
</g>
<path d="M474 481.2 H487 V482.8 H474 Z" fill="#6E6E6E"/>

<!-- zoom slider -->
<rect x="504.9" y="486" width="5.7" height="1.8" fill="#555"/>
<rect x="514.5" y="486.2" width="100.5" height="1" fill="#A8A8A8"/>
<rect x="565" y="484.5" width="1" height="4" fill="#A8A8A8"/>
<rect x="527" y="481.5" width="4.9" height="10.5" fill="#6A6A6A"/>
<path d="M618.5 486.6 H626 M622.25 482.8 V490.4" stroke="#555" stroke-width="1.8"/>
</svg>
<!-- cursor -->
<svg class="a" style="left:660px;top:118px" width="30" height="30" viewBox="660 118 30 30">
<path d="M666.5 123.5 V140.5 L670.5 136.8 L673.5 142 L676 140.8 L673.3 135.8 L678.5 135.5 Z" fill="#FFFFFF" stroke="#1A1A1A" stroke-width="0.9" stroke-linejoin="round"/>
</svg>
</body></html>
